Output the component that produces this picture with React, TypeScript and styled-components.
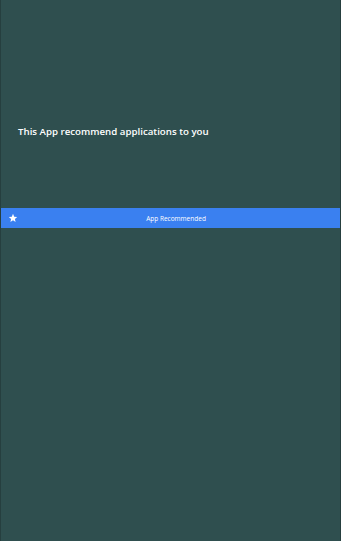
import React from "react";
import styled, { createGlobalStyle } from "styled-components";

const Global = createGlobalStyle`
  html, body { margin: 0; padding: 0; background: #2f4f4f; }
  body { font-family: "Open Sans", "Noto Sans", sans-serif; }
`;

const Page = styled.div`
  box-sizing: border-box;
  width: 341px;
  height: 541px;
  background: #2f4f4f;
  border-left: 1px solid #263f3f;
  border-right: 1px solid #263f3f;
  display: flex;
  flex-direction: column;
`;

const Hero = styled.div`
  height: 208px;
  box-sizing: border-box;
  padding: 125px 0 0 17px;
`;

const Title = styled.h1`
  margin: 0;
  color: #ffffff;
  font-size: 9.7px;
  line-height: 14px;
  font-weight: 600;
`;

const Bar = styled.div`
  height: 20px;
  background: #3a80f0;
  display: grid;
  grid-template-columns: 20px 1fr 20px;
  align-items: center;
`;

const StarWrap = styled.div`
  display: flex;
  justify-content: center;
  align-items: center;
  padding-left: 4px;
`;

const BarLabel = styled.span`
  color: #ffffff;
  font-size: 6.5px;
  text-align: center;
  padding-left: 11px;
`;

export default function App() {
  return (
    <>
      <Global />
      <Page>
        <Hero>
          <Title>This App recommend applications to you</Title>
        </Hero>
        <Bar>
          <StarWrap>
            <svg width="10" height="10" viewBox="0 0 24 24">
              <path
                fill="#fff"
                d="M12 2l2.9 6.9 7.1.6-5.4 4.7 1.6 7.1L12 17.6 5.8 21.3l1.6-7.1L2 9.5l7.1-.6z"
              />
            </svg>
          </StarWrap>
          <BarLabel>App Recommended</BarLabel>
          <span />
        </Bar>
      </Page>
    </>
  );
}
